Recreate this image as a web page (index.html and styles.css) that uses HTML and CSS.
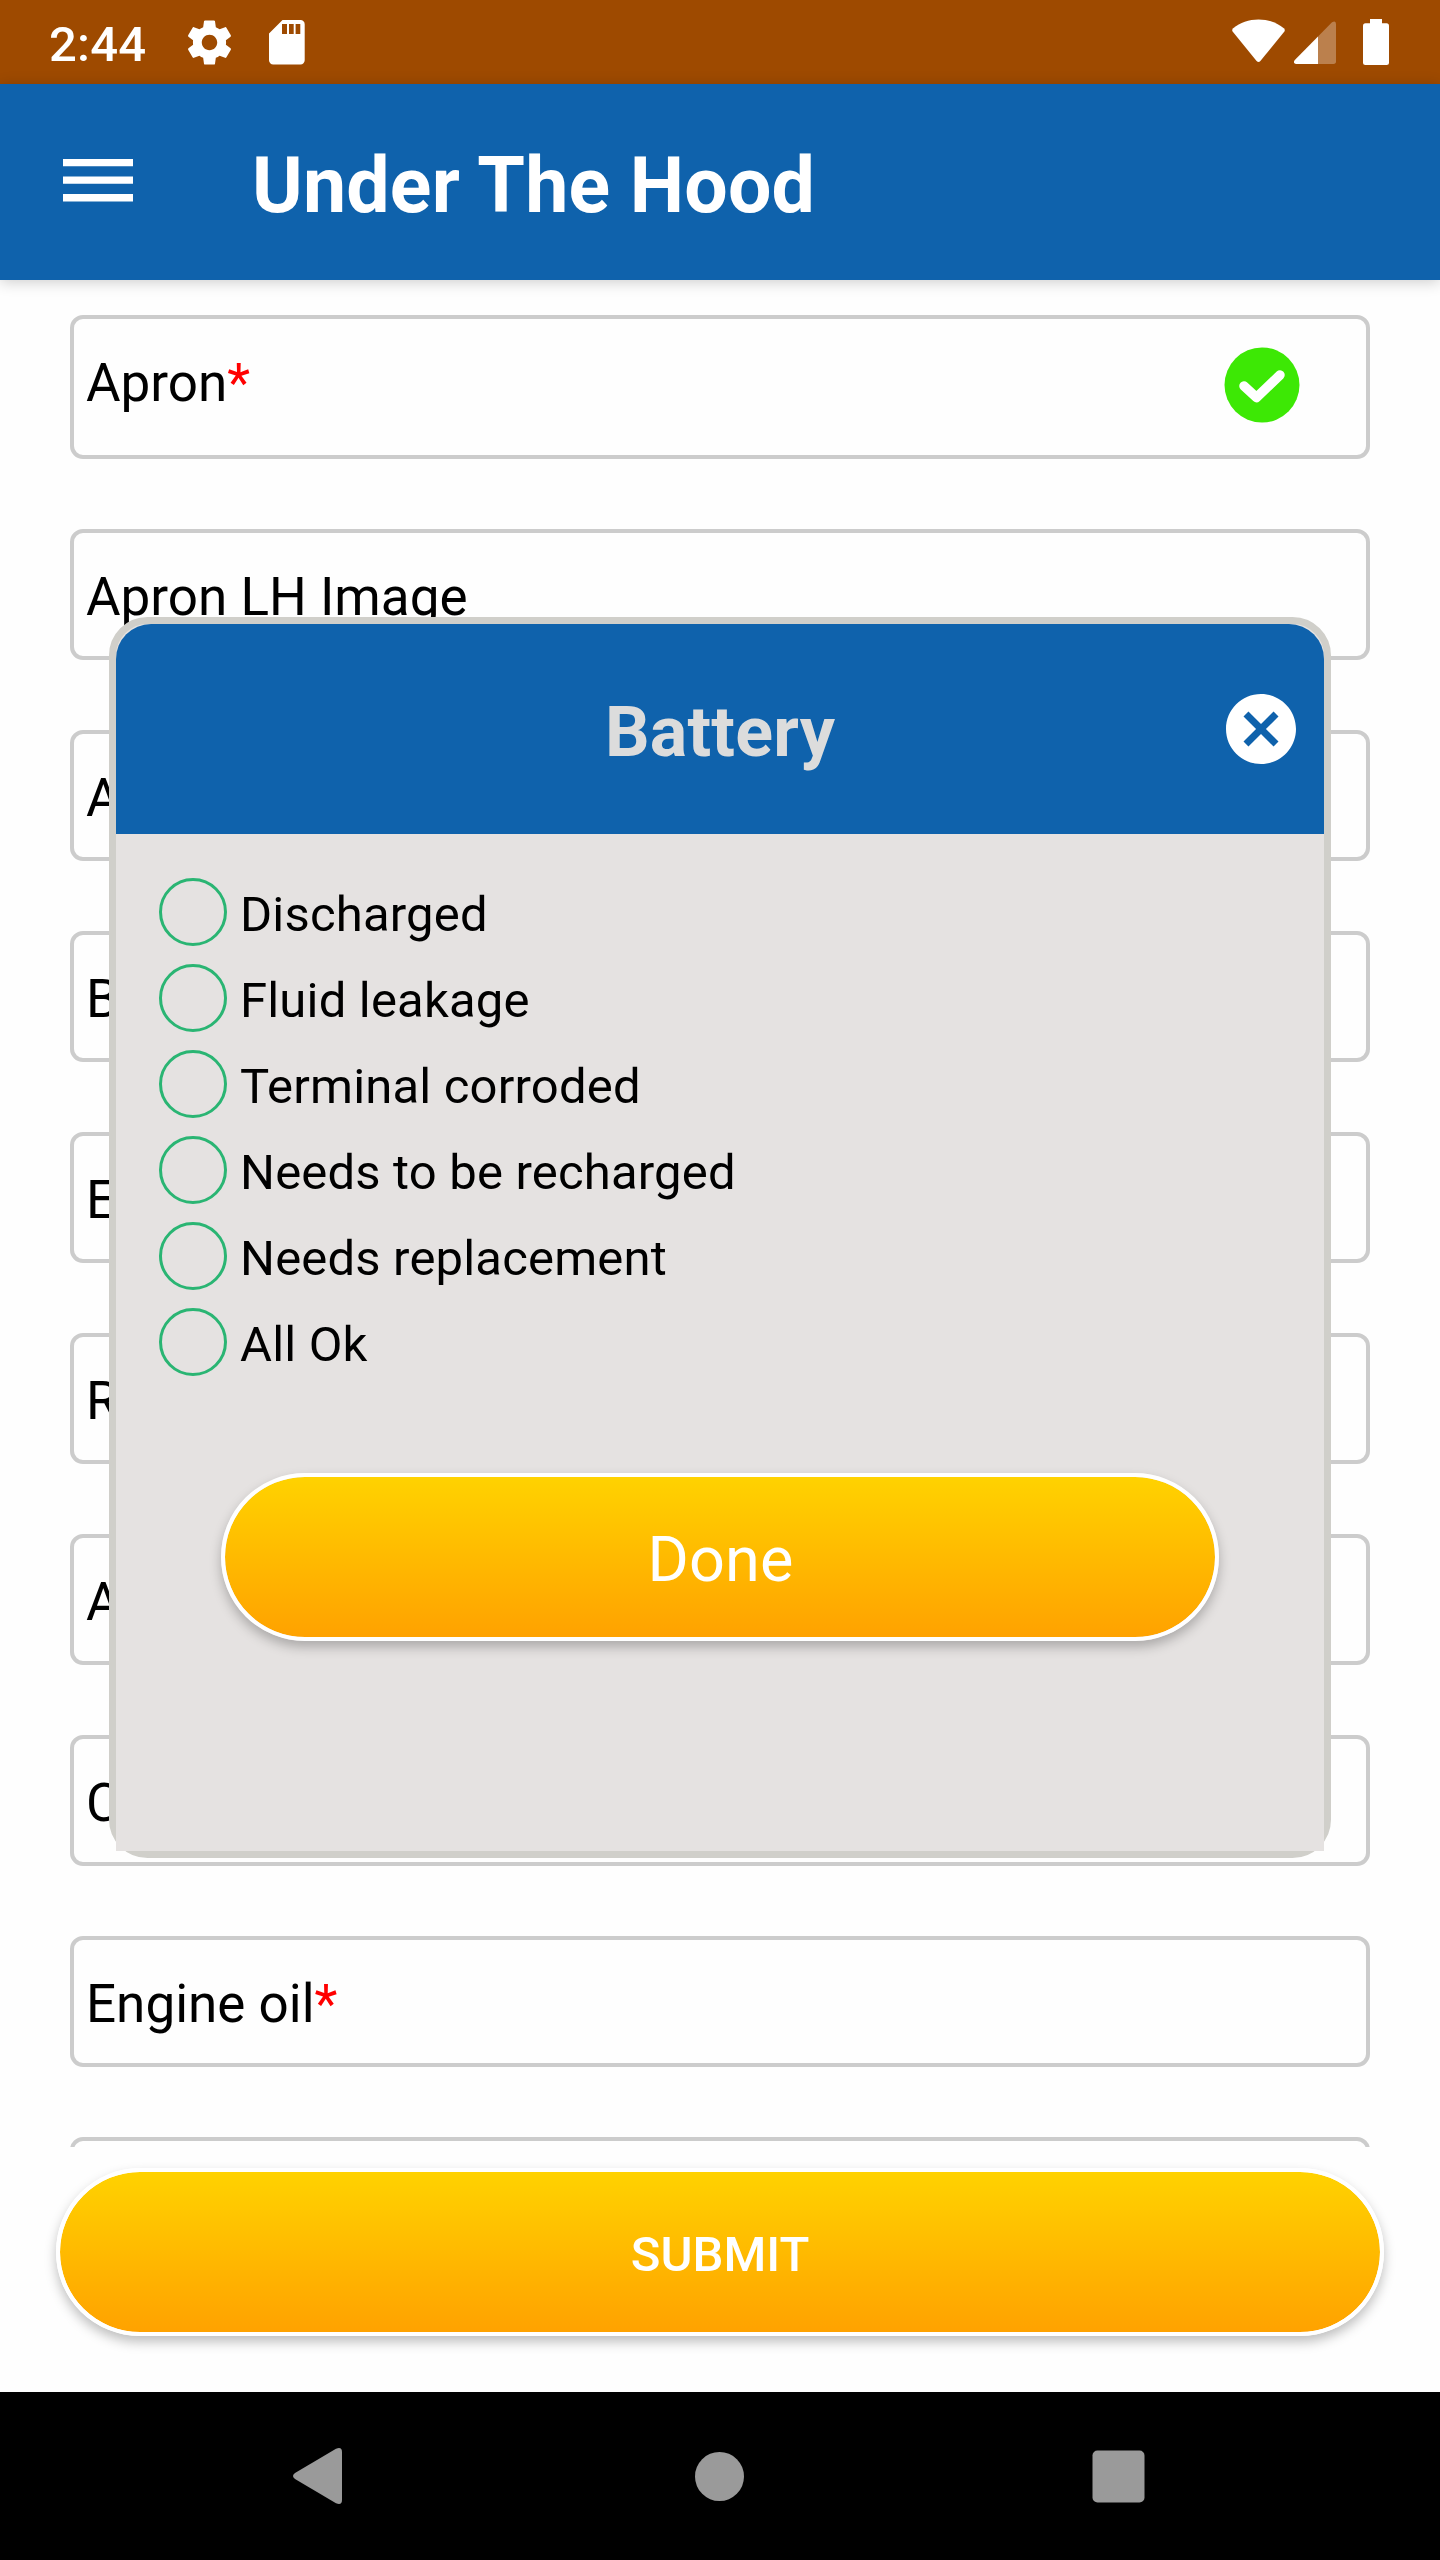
FILE: index.html
```html
<!DOCTYPE html>
<html lang="en">
<head>
<meta charset="utf-8">
<title>Under The Hood</title>
<link rel="stylesheet" href="styles.css">
</head>
<body>
<div class="screen">
  <header class="status">
    <span class="clock">2:44</span>
    <svg class="status-gear" width="53" height="53" viewBox="0 0 24 24"><path fill="#fff" d="M19.43 12.98c.04-.32.07-.64.07-.98s-.03-.66-.07-.98l2.11-1.65c.19-.15.24-.42.12-.64l-2-3.46c-.12-.22-.39-.3-.61-.22l-2.49 1c-.52-.4-1.08-.73-1.69-.98l-.38-2.65C14.46 2.18 14.25 2 14 2h-4c-.25 0-.46.18-.49.42l-.38 2.65c-.61.25-1.17.59-1.69.98l-2.49-1c-.23-.09-.49 0-.61.22l-2 3.46c-.13.22-.07.49.12.64l2.11 1.65c-.04.32-.07.65-.07.98s.03.66.07.98l-2.11 1.65c-.19.15-.24.42-.12.64l2 3.46c.12.22.39.3.61.22l2.49-1c.52.4 1.08.73 1.69.98l.38 2.65c.03.24.24.42.49.42h4c.25 0 .46-.18.49-.42l.38-2.65c.61-.25 1.17-.59 1.69-.98l2.49 1c.23.09.49 0 .61-.22l2-3.46c.12-.22.07-.49-.12-.64l-2.11-1.65zM12 15.5c-1.93 0-3.5-1.57-3.5-3.5s1.57-3.5 3.5-3.5 3.5 1.57 3.5 3.5-1.57 3.5-3.5 3.5z"/></svg>
    <svg class="status-card" width="36" height="45" viewBox="0 0 36 45"><path fill="#fff" fill-rule="evenodd" d="M13.5 0H31.500a4.200 4.200 0 0 1 4.200 4.200V40.300a4.200 4.200 0 0 1-4.200 4.200H4.200a4.200 4.200 0 0 1-4.200-4.200V13.400ZM13 4v10h5V4ZM20 4v10h4.700V4ZM26.600 4v10h4.700V4Z"/></svg>
    <div class="status-right">
      <svg width="53" height="46" viewBox="0 0 53 46"><path fill="#fff" d="M1.200 9.200C8 3.500 17 .4 26.500.4S45 3.500 51.800 9.200Q53.600 10.800 52.200 12.800L28.400 42Q26.500 43.800 24.600 42L.8 12.800Q-.6 10.800 1.200 9.200Z"/></svg>
      <svg width="42" height="46" viewBox="0 0 42 46"><path fill="#fff" fill-opacity=".3" d="M24 17.500 38 3.300Q42 1 42 5V42.300Q42 45 39.500 45H24Z"/><path fill="#fff" d="M24 17.500V45H2Q-1.500 44 .8 41Z"/></svg>
      <svg width="26" height="46" viewBox="0 0 26 46"><path fill="#fff" d="M7 0H19V4.300H23.500Q26 4.300 26 7V43.500Q26 46 23.500 46H2.500Q0 46 0 43.500V7Q0 4.300 2.500 4.300H7Z"/></svg>
    </div>
  </header>
  <nav class="appbar">
    <svg class="menu" width="70" height="43" viewBox="0 0 70 43"><path fill="#fff" d="M0 0H70V7.300H0ZM0 17.500H70V24.800H0ZM0 35H70V42.500H0Z"/></svg>
    <h1 class="appbar-title">Under The Hood</h1>
  </nav>
  <main class="list">
    <div class="field field-first"><span>Apron<b class="req">*</b></span>
      <svg class="tick" width="76" height="76" viewBox="0 0 76 76"><circle cx="38" cy="38" r="37.500" fill="#3de805"/><path d="M20 39 32.500 50.500 56 28" fill="none" stroke="#fff" stroke-width="9.500" stroke-linecap="round" stroke-linejoin="round"/></svg>
    </div>
    <div class="field">Apron LH Image</div>
    <div class="field">Apron RH Image</div>
    <div class="field">Battery<b class="req">*</b></div>
    <div class="field">Engine<b class="req">*</b></div>
    <div class="field">Radiator<b class="req">*</b></div>
    <div class="field">AC<b class="req">*</b></div>
    <div class="field">Coolant<b class="req">*</b></div>
    <div class="field">Engine oil<b class="req">*</b></div>
    <div class="field"></div>
  </main>
  <footer class="footer"><button class="pill submit">SUBMIT</button></footer>
  <div class="navbar">
    <svg width="49" height="56" viewBox="0 0 49 56"><path fill="#9a9a9a" d="M2 25 43 .8Q49-1.500 49 4V52Q49 57.500 43 55.200L2 31Q-2 28 2 25Z"/></svg>
    <svg class="nav-home" width="49" height="49" viewBox="0 0 49 49"><circle cx="24.500" cy="24.500" r="24.500" fill="#9a9a9a"/></svg>
    <svg class="nav-recent" width="53" height="53" viewBox="0 0 53 53"><rect x=".5" y=".5" width="52" height="52" rx="5" fill="#9a9a9a"/></svg>
  </div>

  <section class="dialog">
    <div class="dialog-head">
      <h2 class="dialog-title">Battery</h2>
      <svg class="close" width="84" height="84" viewBox="0 0 24 24"><path fill="#fff" d="M12 2C6.470 2 2 6.470 2 12s4.470 10 10 10 10-4.470 10-10S17.530 2 12 2zm5 13.590L15.590 17 12 13.410 8.410 17 7 15.590 10.590 12 7 8.410 8.410 7 12 10.590 15.590 7 17 8.410 13.410 12 17 15.590z"/></svg>
    </div>
    <div class="dialog-body">
      <div class="option"><i class="radio"></i><span class="option-label">Discharged</span></div>
      <div class="option"><i class="radio"></i><span class="option-label">Fluid leakage</span></div>
      <div class="option"><i class="radio"></i><span class="option-label">Terminal corroded</span></div>
      <div class="option"><i class="radio"></i><span class="option-label">Needs to be recharged</span></div>
      <div class="option"><i class="radio"></i><span class="option-label">Needs replacement</span></div>
      <div class="option"><i class="radio"></i><span class="option-label">All Ok</span></div>
      <button class="pill done">Done</button>
    </div>
  </section>
</div>
</body>
</html>
```
FILE: styles.css
```css
* { box-sizing: border-box; }
body { margin: 0; font-family: Roboto, "Liberation Sans", sans-serif; color: #000; }
svg { display: block; flex: none; }
h1, h2 { margin: 0; }

.screen {
  position: relative;
  display: flex;
  flex-direction: column;
  width: 1440px;
  height: 2560px;
  overflow: hidden;
  background: #fefefe;
}

.status {
  display: flex;
  align-items: flex-start;
  height: 84px;
  padding: 16px 51px 0 49px;
  background: #9e4a00;
  color: #fff;
}
.clock { width: 134px; font-size: 49px; font-weight: 500; line-height: 58px; letter-spacing: .2px; }
.status-card { margin: 4px 0 0 32.500px; }
.status-right { display: flex; gap: 27px; margin: 3px 0 0 auto; }
.status-right svg:nth-child(2) { margin-left: -18px; }

.appbar {
  display: flex;
  align-items: center;
  gap: 119px;
  height: 196px;
  padding-left: 63px;
  background: #0f62ac;
  color: #fff;
  box-shadow: 0 2px 14px rgba(0, 0, 0, .2);
  z-index: 1;
}
.menu { margin-bottom: 3px; }
.appbar-title { padding-top: 7px; font-size: 77px; font-weight: 700; line-height: 90px; letter-spacing: .2px; }

.list {
  display: flex;
  flex-direction: column;
  gap: 70px;
  height: 1867px;
  padding: 35px 70px 0;
  overflow: hidden;
}
.field {
  flex: none;
  display: flex;
  height: 131px;
  padding: 33px 12px 0;
  border: 4px solid #ccc;
  border-radius: 13px;
  font-size: 53px;
  line-height: 62px;
}
.field-first { justify-content: space-between; height: 144px; padding-right: 66px; }
.tick { margin-top: -5px; }
.req { font-weight: 400; color: #f00; }

.footer { height: 245px; padding: 21px 56px 0; }
.pill {
  display: block;
  height: 168px;
  border: 4px solid #fff;
  border-radius: 84px;
  background: linear-gradient(#ffd200, #ffa200) padding-box;
  color: #fff;
  font-family: inherit;
  box-shadow: 0 6px 12px rgba(0, 0, 0, .25);
}
.submit { width: 1328px; padding: 5px 0 0; font-size: 49px; font-weight: 500; }

.navbar {
  display: flex;
  align-items: center;
  height: 168px;
  padding-left: 293px;
  background: #000;
}
.nav-home { margin-left: 353px; }
.nav-recent { margin-left: 347.500px; }

.dialog {
  position: absolute;
  left: 109px;
  top: 617px;
  width: 1222px;
  height: 1241px;
  border: 7px solid #d0cfca;
  border-radius: 38.500px;
  background: #e5e2e1;
  z-index: 2;
}
.dialog-head {
  display: grid;
  grid-template-columns: 105px 1fr 105px;
  align-items: center;
  height: 210px;
  border-radius: 35px 35px 0 0;
  background: #0f62ac;
}
.dialog-title {
  grid-column: 2;
  padding-top: 6px;
  color: #dcdcdc;
  font-size: 70px;
  line-height: 82px;
  letter-spacing: .2px;
  text-align: center;
}
.dialog-body { height: 1017px; padding: 35px 43px 0; background: #e5e2e1; }
.option { display: flex; align-items: center; gap: 13px; height: 86px; }
.radio { width: 68px; height: 68px; border: 3px solid #2ab573; border-radius: 50%; }
.option-label { padding-top: 5px; font-size: 49px; line-height: 58px; letter-spacing: .18px; }
.done { width: 998px; margin: 88px 62px 0; padding: 5px 0 0 1px; font-size: 63px; letter-spacing: .1px; }
```
